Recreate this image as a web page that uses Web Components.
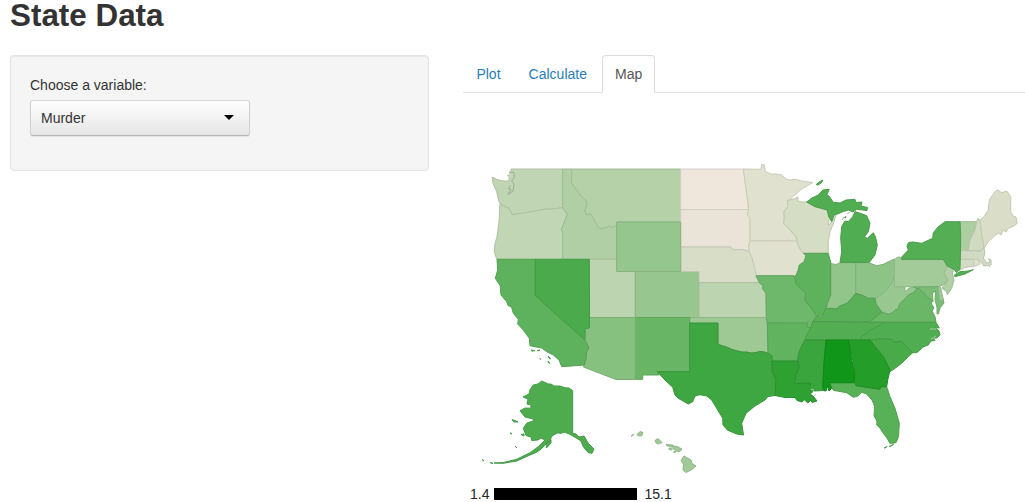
<!DOCTYPE html>
<html lang="en">
<head>
<meta charset="utf-8">
<title>State Data</title>
<style>
html,body{margin:0;height:502px;overflow:hidden;background:#fff}
body{font:14px/20px "Liberation Sans",Arial,sans-serif;color:#333}
</style>
</head>
<body>
<state-app></state-app>
<script>
const define = (name, html, init) => customElements.define(name, class extends HTMLElement {
  constructor() {
    super();
    this.attachShadow({mode: 'open'}).innerHTML = html;
  }
  connectedCallback() { if (init) init(this, this.shadowRoot); }
});

define('well-panel', `<style>
:host{display:block;box-sizing:border-box;height:116px;padding:19px;background:#f5f5f5;border:1px solid #e3e3e3;border-radius:4px;box-shadow:inset 0 1px 1px rgba(0,0,0,.05)}
</style><slot></slot>`);

define('select-box', `<style>
:host{display:block}
label{display:block;margin-bottom:5px}
.box{box-sizing:border-box;width:220px;height:36px;display:flex;align-items:center;justify-content:space-between;padding:0 15px 0 10px;border:1px solid;border-color:#d8d8d8 #d0d0d0 #b8b8b8;border-radius:3px;background:linear-gradient(#fefefe,#e6e6e6);box-shadow:0 1px 1px rgba(0,0,0,.08)}
svg{display:block;width:10px;height:5px;margin-top:-1px}
</style><label><slot name="label"></slot></label><div class="box"><slot></slot><svg viewBox="0 0 10 5"><path d="M0 0H10L5 5Z"/></svg></div>`);

define('nav-tab', `<style>
:host{display:block;box-sizing:border-box;height:38px;padding:8px 11.7px 8px 12.4px;margin-right:2px;border:1px solid transparent;color:#2a7db9;border-radius:4px 4px 0 0}
:host([active]){color:#555;background:#fff;border-color:#ddd #ddd #fff}
</style><slot></slot>`);

define('nav-tabs', `<style>
:host{display:flex;box-sizing:border-box;height:38px;padding-left:0;border-bottom:1px solid #ddd}
</style><slot></slot>`);

define('color-legend', `<style>
:host{display:flex;align-items:center;height:14px;padding-left:7px;color:#222;line-height:14px}
i{width:143px;height:12px;margin:0 7px 0 5px;background:#000}
::slotted(span){margin-top:-1px}
</style><slot name="min"></slot><i></i><slot name="max"></slot>`);

// Murder rate and outline of each state
const states = [
['WA',4.3,'492.3,177 497,179.5 503,181 508.5,181 509.5,177 507.5,175.5 511,175 511,169 562.7,169 562.7,207.7 553,209 545,209.3 531.7,211.7 524,213 512.3,214.7 509,208.3 504,206.5 500,203.3 499,201.7 496.7,191.7 493,183.3'],
['OR',4.2,'500,203.3 504,206.5 509,208.3 512.3,214.7 524,213 531.7,211.7 545,209.3 553,209 562.7,207.7 567.3,214.3 565,220 561.3,230 562.7,232 562.7,259.3 496.7,259.3 494.3,251.7 494.7,245 497,236.7 499,221.7 499.7,208'],
['ID',5.3,'562.7,169 571.7,169 571.7,183.3 576.7,190 581.7,196.7 585.7,200 587,203 585,211.7 586.7,215 590.3,213.3 593.3,218.3 597,225 600,228.8 605,227.7 610,226 612,227.5 616.7,225.5 616.7,259.3 562.7,259.3 562.7,232 561.3,230 565,220 567.3,214.3 562.7,207.7'],
['MT',5,'571.7,169 680.7,169 680.7,222 616.7,222 616.7,225.5 612,227.5 610,226 605,227.7 600,228.8 597,225 593.3,218.3 590.3,213.3 586.7,215 585,211.7 587,203 585.7,200 581.7,196.7 576.7,190 571.7,183.3'],
['UT',4.5,'589.3,259.3 616.7,259.3 616.7,271.5 635.3,271.5 635.3,317.5 589.3,317.5'],
['CO',6.8,'635.3,271.5 699,271.5 699,317.5 635.3,317.5'],
['ND',1.4,'680.7,169 743.3,169 745.3,183.3 747.3,198.3 748.7,209.5 680.7,209.5'],
['SD',1.7,'680.7,209.5 748.7,209.5 747.3,214.3 750,218.3 750,241 748.7,245.7 749.3,251.7 743.3,249.7 736.7,249.7 734,250 730.7,247 680.7,247'],
['NE',2.9,'680.7,247 730.7,247 734,250 736.7,249.7 743.3,249.7 749.3,251.7 751.7,256.7 754,265 756,273.3 759.3,282.7 699,282.7 699,271.5 680.7,271.5'],
['KS',4.5,'699,282.7 759.3,282.7 763.3,286 762.3,288.3 766,293.3 766.3,317.5 699,317.5'],
['OK',6.4,'690,317.5 766.7,317.5 768,330 768,353.3 763.3,351.7 760,351.5 755,352.7 751,353 746.7,352 742,352 736.7,350.7 732,349.5 727.3,347.3 718,344.3 718,323 689.7,323'],
['MN',2.3,'743.3,169 761,169.3 761.7,164.3 764.3,165 765.3,171.7 771.7,174 776,174 781.7,175 786,179 790,180 796,179.5 801.7,181 812.7,182.7 801.7,189 791.7,197.7 787.7,200.7 787.7,206.7 784,211.7 784.3,218.3 783.7,223.3 790,230 796,236.7 796.7,241 750,241 750,218.3 747.3,214.3 748.7,209.5 747.3,198.3 745.3,183.3'],
['IA',2.3,'750,241 796.7,241 798.3,245 800,249 806,255 804.3,261.7 799.3,265 798.3,270 796.7,275.7 756,275.7 756,273.3 754,265 751.7,256.7 749.3,251.7 748.7,245.7'],
['WI',3,'787.7,200.7 793.3,199 798,197 798,201 803.3,202 806.7,202 815,206.7 827.3,210 829.3,218.3 828.3,225 830,224 836,215 833.3,224 830,231.7 828.3,241.7 828.3,253.3 803.3,253.3 800,249 798.3,245 796,236.7 790,230 783.7,223.3 784.3,218.3 784,211.7 787.7,206.7'],
['IN',7.1,'830.7,263.5 836,264.5 840,262.7 855.7,262.7 855.7,293.3 851.7,298.3 846.7,303.3 840,306 836,309 831.7,308.3 826,308.3 827.3,303.3 830.7,295'],
['OH',7.4,'855.7,262.7 868.3,262.3 872,264 876.7,265.7 883.3,264.3 890,261 894.7,259 894.7,276.7 891.7,283.3 885,291.7 878.3,296.7 875,298.3 868.3,298.3 861.7,295 855.7,293.3'],
['WV',6.7,'894.5,276.7 894.5,286.7 905,286.7 905,291.7 909,288 913.3,287.3 918,287.5 913.3,292.7 908.3,295 904,300 900,303.3 898,309 895,310 892,313 888.3,314.3 881.7,313.3 878.3,310 875.5,304 875,298.3 878.3,296.7 885,291.7 891.7,283.3'],
['PA',6.1,'894.5,260 896.7,257.5 900,257 901,259.3 943.3,259.3 947.3,266 944,273.3 948,280 943.3,285 938.3,286.7 894.5,286.7'],
['VT',5.5,'960,221.7 976.7,221.7 975,230 970,240 968.3,250.5 960.5,250.5'],
['NH',3.3,'976.7,221.7 977.7,218.3 980,220 981.7,235 984,247.5 980,251 968.3,250.5 970,240 975,230'],
['ME',2.7,'980,220 984,216.7 988.3,210 989.3,200 995,191.5 998,190 1001.7,192.7 1006.7,191 1010.7,196.7 1010.7,211.7 1013,216 1016,217 1017.3,223.3 1014,226 1008.3,228.3 1006,232 1003,230 1001,235 998,233 993.3,237 988.3,241.7 984.3,247.7 981.7,235'],
['MA',3.3,'960.5,250.5 980,251 984,248 985,253.3 983.3,258 986.7,263 990,262 988.5,258.5 991,260 991,265 984.5,266 981,262.5 978,259.3 960,259.3'],
['CT',3.1,'960,259.3 973.5,259.3 974,266 965,267.5 959,270.5'],
['RI',2.4,'973.5,259.3 978,259.3 980,264 974,266.5'],
['NJ',5.2,'947.3,266 953.3,269 952.5,274 954,280 951.7,288.3 947.3,294.5 946,291 942,288.3 948,280 944,273.3'],
['MD',8.5,'913.3,287 938.3,286.7 940,300 943.3,300 944,303 940,308 938.3,314 937,314 937,307 935,300 935.5,291 932.5,293 933,302 926.7,297 920,290'],
['DE',6.2,'938.3,286.7 940.5,287 942,294 943.5,300 939.7,300.7'],
['VA',9.5,'864,322.3 875,317 881.7,312 888.3,314.3 892,313 895,310 898,309 900,303.3 904,300 908.3,295 913.3,292.7 918,288 924,293 926.7,297 931.7,300 931.5,304 934,308 932,311 935,316.7 936,322.3'],
['NM',9.7,'635.3,317.5 689.7,317.5 689.7,371.7 657.3,371.7 659.3,375 642.7,375 642.7,379.3 635.3,379.3'],
['AZ',7.8,'589.3,317.5 635.3,317.5 635.3,379.5 616,379.5 583.5,367 585.7,360 586.7,351.7 589,347.7 586,341.7 585,328.5 589.5,328'],
['HI',6.2,'637,434.5 640,431.5 643,432.5 641.5,436 638,435.8M655,440.5 658,438.5 662,442.5 658,444 655.5,442.5M666,444.5 673,445 673,446.5 667,446M669,448 672,448 672,450 669,449.5M673,446 677,446.5 682,449 680,451.5 676,451 673,448.5M673.5,452 675.5,451.5 675,453M631,436 633.5,434.3 632.5,436M682.5,458 684,456 691,460 692,463.5 696,466 692,469.5 686,472.5 683,470 683.5,464 681,461'],
['WY',6.9,'616.7,222 680.7,222 680.7,271.5 616.7,271.5'],
['MO',9.3,'756,275.7 794,275.7 795,277.5 796,284 805.7,293 805,300 810,306.7 814,311.5 816,317.3 812,323.3 811,327.7 806.7,326.7 807.7,323.3 767.3,323 766.3,317.5 766,293.3 762.3,288.3 763.3,286 759.3,282.7'],
['AR',10.1,'767.3,323 807.7,323 806.7,327 811,327.7 806.7,335 805,340 800.7,348.3 798.3,355 797.7,361 771.7,361 771.7,356 768,353.3'],
['CA',10.3,'497,259.3 535.3,259.3 535.3,295.5 585,340 586,341.7 589,347.7 586.7,351.7 585.7,360 584.3,365 561.7,366.7 559,360 553.3,355 546.7,351.7 541.7,348 530,345.7 529.3,338.3 523.3,330 517.7,324 518.3,319.3 513.3,313.3 511.5,307 508,305.5 506.7,301.7 501,295 500.3,286 495.3,278.3 497.7,270M531,350 535,350.5 532,351.3M537,350.5 540,350 538,351M548,356 551,359 549,358M540,358.5 540.7,359.5 539.8,359M548,361 550,363.5 548,362'],
['IL',10.3,'803.3,253.3 828.3,253.3 830.7,262.3 830.7,295 827.3,303.3 826,308.3 823.3,315 817.3,317.3 814,311.5 810,306.7 805,300 805.7,293 796,284 795,277.5 798.3,270 799.3,265 804.3,261.7 806,255'],
['KY',10.6,'812.7,321.7 816,317 819,316 820,318 823.3,315 825,309 831.7,308.3 836,309 840,306 846.7,303.3 851.7,298.3 855.7,293.3 861.7,295 868.3,298.3 875,298.3 876,304 881.7,312 873,319 868.3,321.7 826,321.7'],
['FL',10.7,'830,382.7 854.3,382.7 856,385.7 880,389 880.7,386.7 886.7,386.7 890,396.7 895,408.3 899.3,423.3 898.5,436.7 896,442.7 890,443.5 887,438 883.3,433.3 880,428 876.7,425 877,421 874,416 874.3,411.7 874.5,406 872,400 866,393.5 861.5,392.5 858,396 853.3,397.3 846.7,392.7 833.3,390.3M884,448 886,447.5 887,446.5M889,446.5 891,446 893.5,444.5'],
['NY',10.9,'901.7,259.3 901.7,257 908.3,250 907,246 908.5,242.5 913,242 921.7,243.3 932.7,238.3 933.3,232.7 938,227 945,221.7 960,221.7 960.7,236.7 960.5,250 960,269 956.7,272.5 953.5,269 947.3,266 943.3,259.3M954.3,275 960,271.7 968,271 973.3,269.7 965,274 955,276.7'],
['TN',11,'812.7,321.7 826,321.7 885,322.3 883.3,323.3 870,330.7 861.7,336.7 860,340 805,340 806.7,335 811,327.7'],
['NC',11.1,'885,322.3 936,322.3 939.3,328 935,327.5 939,331 940,335 937,338 933,338 935,340.5 931,341 928.3,345 923,347 920,350 916.7,352.7 912.7,352.7 901.7,341.7 894,342 891.7,339.3 881.7,338.7 870,340 860,340 861.7,336.7 870,330.7 883.3,323.3'],
['MI',11.1,'806.7,202 812,198 818.3,195 823,190 829.3,189.3 826.7,195 829,196 833.3,202.3 840,203 846,200 855,199.3 856,202.5 862,202 861,206 867.5,207.5 867,210.5 856.7,209.3 853,212 848.3,210 843.3,211.5 836.7,214.3 834,215 831.7,221.7 828.5,216 827.3,210 815,206.7M816,184.6 820,181.5 823,180 821,183 818,185M840,262.3 841.7,251.7 840.7,238 841.7,226.7 845,221 848.3,221.7 852.7,216.7 855,211.7 861,213.5 866.7,215.7 870,223.3 868.3,231.7 864.5,236.7 867.3,238.3 873.3,232.7 875.5,237 877.3,245 875,255 869.3,262.3M844.5,217.5 846,216.5 845.5,218'],
['AK',11.3,'541.7,381 548.3,384 551,384 554,386 560,386 565,387.8 569,388 572.7,390.7 572.7,433.3 576,434 579,437 584,436 588.3,443.3 594,449 592,453.3 588,452.5 583.3,446.7 581,441 576.7,438.3 570,434.3 564,432 561.7,433.3 557,433 552,436 550,440 540,450 535,453 530,455 516.7,461 503.3,463.3 494,463 503,462.6 516.7,459.3 530,452.7 538.3,446.7 545,440 541,438 538,440 531.7,440.5 531,437 526,435.5 523.3,428.3 527,423 533.3,421 533.3,419 525,417 520,410.7 525,408 530.7,408.3 531,405 527,404 528,399 523,397 529,394 530,389.7 533.3,385 538,384M546,443 551,439.5 551,443 546.5,448M512,419.5 516,421 518,422 514,422M521,434.5 524,434 524,436M482,459.5 484,461M510,433 512,434M515,446 517,448M490,462.5 493,463.5'],
['NV',11.5,'535.3,259.3 589.3,259.3 589.5,328 585,328.5 585,340 535.3,295.5'],
['SC',11.6,'870,340 881.7,338.7 891.7,339.3 894,342 901.7,341.7 912.7,352.7 908.3,356.7 901.7,363.3 895,368.3 890,371.7 883.3,356.7 875,346.7'],
['TX',12.2,'689.7,323 718,323 718,344.3 727.3,347.3 732,349.5 736.7,350.7 742,352 746.7,352 751,353 755,352.7 760,351.5 763.3,351.7 768,353.3 772,356 772.3,371.7 776,380 775,395.5 768,396.5 765,400 755,406 746,413.3 741.7,423.3 743.5,435 736.7,434 727.3,430 723,425 722.7,418.3 716.7,408.3 711.7,400 706.7,396 700,394.7 695,396 692.7,401.7 688.3,404 678.3,398.3 675,395 672.7,387.3 665,380 657.3,371.7 689.7,371.7'],
['MS',12.5,'805,340 826,340 824,363 822.7,386.7 823,390.5 814,391 810,388.3 810.7,383.3 794.3,383.3 796,375 799.3,366.7 797.7,361 798.3,355 800.7,348.3'],
['LA',13.2,'771.7,361 797.7,361 799.3,366.7 796,375 794.3,383.3 810.7,383.3 809.5,389 813,391.5 810,394 813,396 817,401 812,402.5 811,400 808,403 804,399.5 802,402 797,400.5 795,397.5 785,397.5 775,395.5 776,380 772.3,371.7'],
['GA',13.9,'848.3,340 870,340 875,346.7 883.3,356.7 890,370 887.7,380 886.7,386.7 880.7,386.7 880,389.3 856,385.7 854.3,380 855,370'],
['AL',15.1,'826,340 848.3,340 851.7,360 854.3,370 854.3,382.7 829.5,382.7 831.7,388.3 829,391 827.5,386 826,391 823.5,390.5 822.7,386.7 824,363']
];
const scale = (v, k) => {
  const t = (v - 1.4) / 13.7, a = [239,230,220], b = [16,150,24];
  return 'rgb(' + a.map((c, i) => Math.round((c + (b[i] - c) * t) * k)) + ')';
};
define('state-map', `<style>:host{display:block;height:390px}svg{display:block;width:562px;height:390px}path{stroke-width:1;stroke-linejoin:round}</style>
<svg viewBox="463 93 562 390"></svg>`, (el, root) => {
  root.querySelector('svg').innerHTML = states.map(([id, v, pts]) =>
    `<path id="${id}" d="M${pts.split('M').join('ZM')}Z" fill="${scale(v,1)}" stroke="${scale(v,.9)}"/>`).join('') +
    '<path d="M509 172L514 172.500V178L511.500 181L514 184L513 191L508 194.500L511 189.500L508.500 188.500L510.500 185.500" fill="#c1d6b5" stroke="#98ac91"/><path d="M842 220l2-3M847 214l3-2M811 389l3 1M814 396l2-2M931 339l5-3M930 329l6 0M983 266l2-1M989 267l1-1" fill="none" stroke="#a3c99b"/>';
});

define('state-app', `<style>
:host{display:block;width:1025px;height:502px;overflow:hidden}
h1{margin:0;padding-left:10px;height:55px;font-size:31.4px;line-height:32px;box-sizing:border-box}
main{display:grid;grid-template-columns:419px 562px;column-gap:34px;padding-left:10px;align-items:start}
color-legend{margin-top:4px}
</style>
<h1>State Data</h1>
<main>
<well-panel><select-box><span slot="label">Choose a variable:</span>Murder</select-box></well-panel>
<section><nav-tabs><nav-tab>Plot</nav-tab><nav-tab>Calculate</nav-tab><nav-tab active>Map</nav-tab></nav-tabs>
<state-map></state-map>
<color-legend><span slot="min">1.4</span><span slot="max">15.1</span></color-legend></section>
</main>`);
</script>
</body>
</html>
